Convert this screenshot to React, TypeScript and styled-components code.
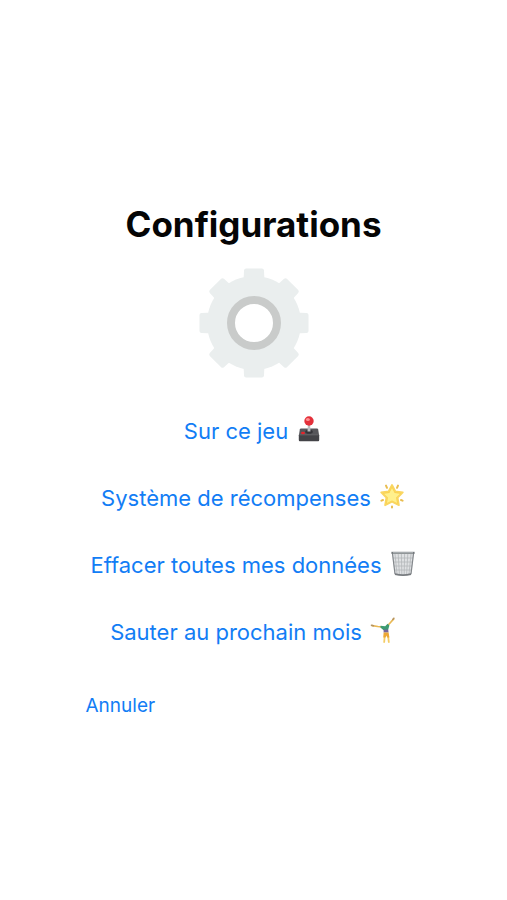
import React from "react";
import styled, { createGlobalStyle } from "styled-components";

const GlobalStyle = createGlobalStyle`
  * { box-sizing: border-box; }
  body {
    margin: 0;
    background: #fff;
    font-family: Inter, "Liberation Sans", sans-serif;
  }
`;

const Page = styled.main`
  display: flex;
  flex-direction: column;
  align-items: center;
  min-height: 100vh;
  padding: 200px 16px 40px;
`;

const Title = styled.h1`
  margin: 0;
  color: #050505;
  font-size: 35px;
  font-weight: 700;
  line-height: 48px;
`;

const Gear = styled.svg`
  display: block;
  width: 110px;
  height: 110px;
  margin-top: 20px;
`;

const Panel = styled.div`
  display: flex;
  flex-direction: column;
  width: 100%;
  max-width: 336px;
  margin-top: 37px;
`;

const Menu = styled.nav`
  display: flex;
  flex-direction: column;
  align-items: center;
  gap: 35px;
`;

const TextButton = styled.button<{ $small?: boolean }>`
  display: flex;
  align-items: center;
  gap: 7px;
  padding: 0;
  border: 0;
  background: none;
  color: #127df5;
  font-family: inherit;
  font-size: ${(p) => (p.$small ? 19 : 22)}px;
  line-height: 32px;
  white-space: nowrap;
  cursor: pointer;
`;

const Footer = styled.footer`
  display: flex;
  margin-top: 42px;
`;

const Emoji = styled.svg`
  flex: none;
  width: 28px;
  height: 28px;
  margin-bottom: 4px;
`;

function Joystick() {
  return (
    <Emoji viewBox="0 0 28 28" aria-hidden="true">
      <path d="M6 13.500h16q1 0 1.200 1l1 6.500H3.800l1-6.500q.2-1 1.200-1z" fill="#56565a" />
      <path d="M4.200 19.500h19.600q.4 0 .4.600v5q0 1.200-1 1.200H4.800q-1 0-1-1.200v-5q0-.6.400-.6z" fill="#434347" />
      <path d="M4.200 19.800h19.600" stroke="#6d6d71" strokeWidth=".8" />
      <ellipse cx="14" cy="16.800" rx="3.800" ry="2" fill="#35353a" />
      <path d="M12.900 9h2.200l.4 7.600h-3z" fill="#bdbdc0" />
      <ellipse cx="8" cy="18" rx="2" ry="1.200" fill="#e5242b" />
      <circle cx="14" cy="6" r="4.700" fill="#e4303a" />
      <ellipse cx="12.900" cy="4.500" rx="2" ry="1.500" fill="#ff9092" />
    </Emoji>
  );
}

function GlowingStar() {
  return (
    <Emoji viewBox="0 0 28 28" aria-hidden="true">
      <g stroke="#e9bd50" strokeWidth="2" strokeLinecap="round">
        <path d="M8 3.600l1 2.200M20 3.600l-1 2.200M3.400 18.600l1.600-.6M24.600 18.600l-1.600-.6M14 24.600v.8" />
      </g>
      <path
        d="M14 3l3.400 6.400 7.400 1-5.200 5.200 1.300 7.600-6.900-3.400-6.900 3.400 1.300-7.600-5.200-5.200 7.400-1z"
        fill="#fbd04b"
        stroke="#fad660"
        strokeWidth="1.8"
        strokeLinejoin="round"
      />
      <path d="M14 6l2.600 5 5.400.8-3.900 3.800.9 5.400-5-2.600-5 2.600.9-5.400L6 11.800l5.400-.8z" fill="#fff08c" />
    </Emoji>
  );
}

function Wastebasket() {
  return (
    <Emoji viewBox="0 0 28 28" aria-hidden="true">
      <path d="M3 4h22l-2.8 22H5.8z" fill="#dfe1e3" />
      <path
        d="M6 5l2 20M9.2 5l1.2 20M12.4 5l.4 20M15.6 5l-.4 20M18.8 5l-1.2 20M22 5l-2 20M4 9h20M4.4 13h19.2M5 17h18M5.5 21h17"
        stroke="#b4b7ba"
        strokeWidth=".8"
      />
      <path d="M3.4 4l2.6 21M24.6 4L22 25" stroke="#84888c" strokeWidth="1.2" />
      <path d="M6 25.2q8 1.8 16 0" fill="none" stroke="#777b7f" strokeWidth="1.8" />
      <path d="M2.4 2.8h23.2v2H2.4z" fill="#73787c" />
      <path d="M4 3.7h20" stroke="#c3c7c9" strokeWidth=".8" />
    </Emoji>
  );
}

function Cartwheel() {
  return (
    <Emoji viewBox="0 0 28 28" aria-hidden="true">
      <g fill="none" strokeLinecap="round" strokeLinejoin="round">
        <path d="M3.200 9.600l5.600.9 4 .4M18.800 9.500l3.400-3.800 2.600-2.700" stroke="#e9b955" strokeWidth="1.700" />
        <path d="M2.400 9.300l2 .5M23.800 3.500l1-1.300" stroke="#b69461" strokeWidth="1.500" />
        <path d="M15.800 19l-.6 7M19 19l.8 7" stroke="#f4cc64" strokeWidth="1.800" />
      </g>
      <path d="M11.600 9.800l4.600.4 2.400-2.400 1.800 1.700-1.400 4.700h-4.400l-3.200-2.600z" fill="#3d9b72" />
      <path d="M14.600 13.600h4.600l.4 3h-5z" fill="#75659c" />
      <path d="M14.600 16.400h5l.8 5h-2.200l-.9-1.800-.8 1.800h-2.200z" fill="#eca735" />
    </Emoji>
  );
}

const actions = [
  { label: "Sur ce jeu", Icon: Joystick },
  { label: "Système de récompenses", Icon: GlowingStar },
  { label: "Effacer toutes mes données", Icon: Wastebasket },
  { label: "Sauter au prochain mois", Icon: Cartwheel },
];

const teeth = [0, 45, 90, 135, 180, 225, 270, 315];

export default function App() {
  return (
    <>
      <GlobalStyle />
      <Page>
        <Title>Configurations</Title>
        <Gear viewBox="0 0 110 110" aria-hidden="true">
          <g fill="#eaeeee">
            {teeth.map((angle) => (
              <path
                key={angle}
                d="M44.500 14L45 2.500q.2-2 2-2h16q1.800 0 2 2l.5 11.500z"
                transform={`rotate(${angle} 55 55)`}
              />
            ))}
            <circle cx="55" cy="55" r="47" />
          </g>
          <circle cx="55" cy="55" r="23" fill="#fff" stroke="#c9cbca" strokeWidth="8" />
        </Gear>
        <Panel>
          <Menu>
            {actions.map(({ label, Icon }) => (
              <TextButton key={label} type="button">
                {label}
                <Icon />
              </TextButton>
            ))}
          </Menu>
          <Footer>
            <TextButton type="button" $small>
              Annuler
            </TextButton>
          </Footer>
        </Panel>
      </Page>
    </>
  );
}
